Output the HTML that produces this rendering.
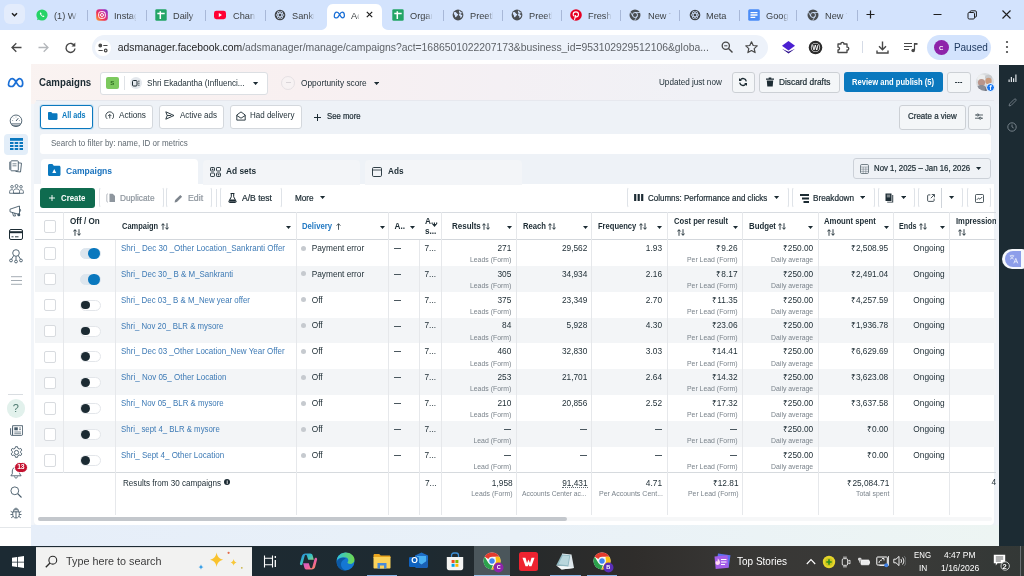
<!DOCTYPE html>
<html lang="en">
<head>
<meta charset="utf-8">
<title>Ads Manager - Campaigns</title>
<style>
*{box-sizing:border-box;margin:0;padding:0}
html,body{width:1024px;height:576px;overflow:hidden;background:#fff}
body{font-family:"Liberation Sans",sans-serif;color:#1c2b33;position:relative;font-size:8px;line-height:1}
.abs{position:absolute}
.t{position:absolute;white-space:nowrap;line-height:1}
/* ---------- browser chrome ---------- */
#tabbar{left:0;top:0;width:1024px;height:30px;background:#d3e3fd}
#toolbar{left:0;top:30px;width:1024px;height:34px;background:#fff;border-radius:5px 5px 0 0}
.tab{position:absolute;top:0;height:30px}
.tabtxt{position:absolute;top:10px;font-size:9.800px;transform-origin:0 0;transform:scaleX(.94);color:#3c4043;white-space:nowrap;overflow:hidden;line-height:12px;-webkit-mask-image:linear-gradient(90deg,#000 72%,transparent 100%);mask-image:linear-gradient(90deg,#000 72%,transparent 100%)}
.tabsep{position:absolute;top:10px;width:1px;height:11px;background:#a8b8d8}
.fav{position:absolute;top:9px;width:12px;height:12px}
#omni{left:92px;top:35px;width:676px;height:25px;border-radius:13px;background:#edf2fa}
/* ---------- page ---------- */
#page{left:0;top:64px;width:999px;height:482px;background:linear-gradient(90deg,#faf3f1 0%,#f8f0f1 30%,#f4f0f4 50%,#f0f1f6 70%,#eff1f6 100%)}
#lnav{left:0;top:64px;width:31px;height:482px;background:#fff}
#rnav{left:998.700px;top:64.500px;width:25.300px;height:481.500px;background:#1c2b33}
#panel{left:33.500px;top:100px;width:962.500px;height:446px;background:#eef2f7;border-radius:6px 6px 0 0}
#white{left:34px;top:184px;width:960px;height:341px;background:#fff;border-radius:0 0 4px 4px}
.btn{position:absolute;background:#f4f6f8;border:1px solid #ccd0d5;border-radius:3px}
.btnw{position:absolute;background:#fff;border:1px solid #d4d8dd;border-radius:3px}
.b{font-weight:bold}
.m{font-weight:normal;-webkit-text-stroke:.22px currentColor}
.brk{position:absolute;top:187px;height:21px;border:1px solid #dfe3e8;border-top-color:transparent;border-bottom-color:transparent;border-radius:3px;background:#fff}
.hd{font-weight:bold;font-size:8.200px;color:#1c2b33}
.nm{font-size:8.600px;color:#3d7ab5}
.v{font-size:8.300px;color:#1c2b33}
.s{font-size:6.900px;color:#7a838b}
.cb{position:absolute;width:12.500px;height:12.500px;border:1px solid #d8dbdf;border-radius:2px;background:#fff}
.tg{position:absolute;left:79.500px;width:21.500px;height:11px;border-radius:6px;background:#fff;border:1px solid #e3e6ea}
.tg i{position:absolute;left:0.700px;top:0.100px;width:8.800px;height:8.800px;border-radius:5px;background:#1c2b33;display:block}
.tg.on{background:#dde6ee;border-color:#dde6ee}
.tg.on i{left:7.900px;top:-1.200px;width:11.500px;height:11.500px;border-radius:6px;background:#0a78be}
.dot{position:absolute;left:300.600px;width:5px;height:5px;border-radius:3px;background:#c6cacf}
.dash{position:absolute;width:7px;height:1px;background:#4a575f}
/* ---------- taskbar ---------- */
#taskbar{left:0;top:546px;width:1024px;height:30px;background:linear-gradient(90deg,#1c2a33 0%,#1e2a31 42%,#272a2b 52%,#2f2d2b 62%,#383735 72%,#3a3a38 88%,#333836 100%)}
</style>
</head>
<body>
<div id="root" style="position:absolute;left:0;top:0;width:1024px;height:576px;overflow:hidden;will-change:transform">
<!-- ================= TAB BAR ================= -->
<div id="tabbar" class="abs"></div>
<div id="toolbar" class="abs"></div>
<!--TABS-START-->
<div class="abs" style="left:4px;top:4px;width:21px;height:20px;border-radius:6px;background:#e3ecfc"></div>
<svg class="abs" style="left:10px;top:10px" width="9" height="9" viewBox="0 0 9 9"><path d="M2 3.200l2.500 2.500L7 3.200" fill="none" stroke="#1f1f1f" stroke-width="1.500"/></svg>
<svg class="abs" style="left:320px;top:4px" width="70" height="26" viewBox="0 0 70 26"><path d="M0 26c4 0 7-2 7-6V7c0-4 2-7 6-7h43c4 0 6 3 6 7v13c0 4 3 6 8 6z" fill="#fff"/></svg>
<svg class="fav" style="left:36px" viewBox="0 0 12 12"><circle cx="6" cy="6" r="5.6" fill="#25d366"/><path d="M1 11.2l1-2.6 1.8 1.4z" fill="#25d366"/><path d="M4.3 3.3c-.5.4-.6 1.1-.3 1.8.5 1.200 1.500 2.200 2.700 2.700.7.300 1.400.200 1.800-.300l-.9-1-.8.400c-.7-.300-1.300-.900-1.600-1.600l.4-.8z" fill="#fff"/></svg>
<div class="tabtxt" style="left:53.7px;width:25px">(1) Wh</div>
<svg class="fav" style="left:96px" viewBox="0 0 12 12"><defs><linearGradient id="igg96" x1="0" y1="1" x2="1" y2="0"><stop offset="0" stop-color="#fdb034"/><stop offset=".35" stop-color="#f4364c"/><stop offset=".7" stop-color="#c32aa3"/><stop offset="1" stop-color="#6a3fd8"/></linearGradient></defs><rect x=".2" y=".2" width="11.600" height="11.600" rx="3" fill="url(#igg96)"/><rect x="2.700" y="2.700" width="6.600" height="6.600" rx="2" fill="none" stroke="#fff" stroke-width="1"/><circle cx="6" cy="6" r="1.500" fill="none" stroke="#fff" stroke-width="1"/><circle cx="8.300" cy="3.700" r=".5" fill="#fff"/></svg>
<div class="tabtxt" style="left:114.3px;width:24px">Instag</div>
<svg class="fav" style="left:155px" viewBox="0 0 12 12"><rect x=".3" y=".2" width="11.400" height="11.600" rx="1.300" fill="#23a566"/><path d="M2.300 4.600h7.400M5.300 2.300v7.600" stroke="#fff" stroke-width="1.500" fill="none"/></svg>
<div class="tabtxt" style="left:173.4px;width:25px">Daily s</div>
<svg class="fav" style="left:214px" viewBox="0 0 12 12"><rect x="0" y="1.800" width="12" height="8.400" rx="2.400" fill="#f03"/><path d="M4.800 4.100l3.200 1.900-3.200 1.900z" fill="#fff"/></svg>
<div class="tabtxt" style="left:232.6px;width:24px">Chann</div>
<svg class="fav" style="left:274px" viewBox="0 0 12 12"><circle cx="6" cy="6" r="5.300" fill="#3f4347"/><g fill="none" stroke="#d3e3fd" stroke-width=".7"><ellipse cx="6" cy="6" rx="4" ry="1.700"/><ellipse cx="6" cy="6" rx="4" ry="1.700" transform="rotate(60 6 6)"/><ellipse cx="6" cy="6" rx="4" ry="1.700" transform="rotate(120 6 6)"/></g></svg>
<div class="tabtxt" style="left:291.8px;width:24px">Sankra</div>
<svg class="fav" style="left:333px;width:13px" viewBox="0 0 13 12"><path d="M1.300 7.600C1.300 5 2.500 3.200 3.900 3.200c1.100 0 1.900.900 2.700 2.400.8 1.500 1.600 3.200 3 3.200 1.100 0 1.800-.900 1.800-2.200 0-2-1-3.400-2.200-3.400-1 0-1.800.900-2.600 2.400-.8 1.500-1.500 3.200-2.900 3.200C2.300 8.800 1.300 8.600 1.300 7.600z" fill="none" stroke="#1a6fd6" stroke-width="1.250" stroke-linejoin="round"/></svg>
<div class="tabtxt" style="left:350.8px;width:8.5px">Ad</div>
<svg class="fav" style="left:391.5px" viewBox="0 0 12 12"><rect x=".3" y=".2" width="11.400" height="11.600" rx="1.300" fill="#23a566"/><path d="M2.300 4.600h7.400M5.300 2.300v7.600" stroke="#fff" stroke-width="1.500" fill="none"/></svg>
<div class="tabtxt" style="left:410.2px;width:24px">Organ</div>
<svg class="fav" style="left:451.5px" viewBox="0 0 12 12"><circle cx="6" cy="6" r="5.400" fill="#4a4e52"/><path d="M2.200 3.200c1.200-.4 2 .2 2.600 1 .5.700 1.600.5 1.400 1.500-.2.900-1.200.7-1.500 1.500-.2.700-.6 1.300-1.200 1-.7-.5-.3-1.400-.9-2.100C2 5.400 1.500 4.300 2.200 3.200zM7.500 1.400c.9.300.6 1.100 1.300 1.500.6.400 1.300.5 1.600 1.300-.6.200-1.200-.1-1.700.3-.5.500.1 1.200.7 1.300.4.100.8.200.9.700-.2 1.200-1 2.100-1.900 2.600-.3-.6.200-1.200-.2-1.800-.4-.6-1.200-.6-1.200-1.400 0-.7.700-.9.700-1.600 0-.6-.7-.7-.8-1.300-.1-.6.200-1.200.6-1.600z" fill="#d3e3fd"/></svg>
<div class="tabtxt" style="left:469.7px;width:25px">Preeth</div>
<svg class="fav" style="left:511px" viewBox="0 0 12 12"><circle cx="6" cy="6" r="5.400" fill="#4a4e52"/><path d="M2.200 3.200c1.200-.4 2 .2 2.600 1 .5.700 1.600.5 1.400 1.500-.2.900-1.200.7-1.500 1.500-.2.700-.6 1.300-1.200 1-.7-.5-.3-1.400-.9-2.100C2 5.400 1.500 4.300 2.200 3.200zM7.500 1.400c.9.300.6 1.100 1.300 1.500.6.400 1.300.5 1.600 1.300-.6.200-1.200-.1-1.700.3-.5.500.1 1.200.7 1.300.4.100.8.200.9.700-.2 1.200-1 2.100-1.900 2.600-.3-.6.200-1.200-.2-1.800-.4-.6-1.200-.6-1.200-1.400 0-.7.700-.9.700-1.600 0-.6-.7-.7-.8-1.300-.1-.6.200-1.200.6-1.600z" fill="#d3e3fd"/></svg>
<div class="tabtxt" style="left:528.5px;width:25px">Preeth</div>
<svg class="fav" style="left:569.5px" viewBox="0 0 12 12"><circle cx="6" cy="6" r="5.800" fill="#e60023"/><path d="M4.600 10.400c.3-1.200.7-2.600 1-3.900M5.200 7.300c1 1 3.300.5 3.300-1.900 0-1.500-1.100-2.500-2.600-2.500-1.700 0-2.700 1.200-2.700 2.500 0 .7.300 1.300.8 1.500" fill="none" stroke="#fff" stroke-width="1.150" stroke-linecap="round"/></svg>
<div class="tabtxt" style="left:587.5px;width:25px">Fresh</div>
<svg class="fav" style="left:629px" viewBox="0 0 12 12"><circle cx="6" cy="6" r="5.500" fill="#4a4e52"/><circle cx="6" cy="6" r="2.500" fill="#4a4e52" stroke="#d3e3fd" stroke-width=".9"/><path d="M6 3.500h5M3.800 7.200L1.400 3M8.200 7.200L5.700 11.400" stroke="#d3e3fd" stroke-width=".8" fill="none"/></svg>
<div class="tabtxt" style="left:647.5px;width:25px">New Ta</div>
<svg class="fav" style="left:688.5px" viewBox="0 0 12 12"><circle cx="6" cy="6" r="5.300" fill="#3f4347"/><g fill="none" stroke="#d3e3fd" stroke-width=".7"><ellipse cx="6" cy="6" rx="4" ry="1.700"/><ellipse cx="6" cy="6" rx="4" ry="1.700" transform="rotate(60 6 6)"/><ellipse cx="6" cy="6" rx="4" ry="1.700" transform="rotate(120 6 6)"/></g></svg>
<div class="tabtxt" style="left:706.4px;width:30px;-webkit-mask-image:none;mask-image:none">Meta</div>
<svg class="fav" style="left:747.5px" viewBox="0 0 12 12"><rect x=".2" y=".2" width="11.600" height="11.600" rx="1.500" fill="#4c8df6"/><path d="M2.500 3.600h7M2.500 6h7M2.500 8.400h4.800" stroke="#fff" stroke-width="1.300" fill="none"/></svg>
<div class="tabtxt" style="left:765.6px;width:24px">Googl</div>
<svg class="fav" style="left:806.5px" viewBox="0 0 12 12"><circle cx="6" cy="6" r="5.500" fill="#4a4e52"/><circle cx="6" cy="6" r="2.500" fill="#4a4e52" stroke="#d3e3fd" stroke-width=".9"/><path d="M6 3.500h5M3.800 7.200L1.400 3M8.200 7.200L5.700 11.400" stroke="#d3e3fd" stroke-width=".8" fill="none"/></svg>
<div class="tabtxt" style="left:825px;width:24px">New Ta</div>
<div class="tabsep" style="left:86.8px"></div>
<div class="tabsep" style="left:146.0px"></div>
<div class="tabsep" style="left:205.4px"></div>
<div class="tabsep" style="left:264.5px"></div>
<div class="tabsep" style="left:442.5px"></div>
<div class="tabsep" style="left:501.5px"></div>
<div class="tabsep" style="left:560.8px"></div>
<div class="tabsep" style="left:620.0px"></div>
<div class="tabsep" style="left:679.2px"></div>
<div class="tabsep" style="left:738.5px"></div>
<div class="tabsep" style="left:795.8px"></div>
<div class="tabsep" style="left:856.7px"></div>
<svg class="abs" style="left:365px;top:10px" width="9" height="9" viewBox="0 0 9 9"><path d="M1.800 1.800l5.400 5.400M7.200 1.800L1.800 7.200" stroke="#1f1f1f" stroke-width="1.200"/></svg>
<svg class="abs" style="left:865px;top:9px" width="11" height="11" viewBox="0 0 11 11"><path d="M5.500 1.500v8M1.500 5.500h8" stroke="#1f1f1f" stroke-width="1.200"/></svg>
<svg class="abs" style="left:932px;top:9px" width="11" height="11" viewBox="0 0 11 11"><path d="M1.500 5.500h8" stroke="#1f1f1f" stroke-width="1"/></svg>
<svg class="abs" style="left:966px;top:9px" width="12" height="12" viewBox="0 0 12 12"><rect x="2" y="3.500" width="6.500" height="6.500" rx="1.200" fill="none" stroke="#1f1f1f" stroke-width="1"/><path d="M4 3.500V3c0-.8.500-1.200 1.200-1.200h4c.8 0 1.200.5 1.200 1.200v4c0 .8-.4 1.200-1.200 1.200h-.6" fill="none" stroke="#1f1f1f" stroke-width="1"/></svg>
<svg class="abs" style="left:1001px;top:9px" width="11" height="11" viewBox="0 0 11 11"><path d="M1.500 1.500l8 8M9.500 1.500l-8 8" stroke="#1f1f1f" stroke-width="1.100"/></svg>
<!--TABS-END-->
<div id="omni" class="abs"></div>
<!--TB-START-->
<svg class="abs" style="left:10px;top:41px" width="13" height="13" viewBox="0 0 13 13"><path d="M11.500 6.500h-9.500M6.300 2.200L2 6.500l4.300 4.300" fill="none" stroke="#474747" stroke-width="1.300"/></svg>
<svg class="abs" style="left:37px;top:41px" width="13" height="13" viewBox="0 0 13 13"><path d="M1.500 6.500h9.500M6.700 2.200L11 6.500l-4.300 4.300" fill="none" stroke="#b4b7bb" stroke-width="1.300"/></svg>
<svg class="abs" style="left:64px;top:41px" width="13" height="13" viewBox="0 0 13 13"><path d="M10.600 5A4.500 4.500 0 1 0 11 7.500" fill="none" stroke="#474747" stroke-width="1.400"/><path d="M11.300 1.600v3.800H7.500z" fill="#474747"/></svg>
<div class="abs" style="left:95px;top:40px;width:15.5px;height:15.5px;border-radius:8px;background:#fff"></div>
<svg class="abs" style="left:97px;top:42px" width="12" height="12" viewBox="0 0 12 12"><g fill="none" stroke="#474747" stroke-width="1.200"><circle cx="3.300" cy="3.500" r="1.300" fill="#474747"/><path d="M6.300 3.500h4.200M1.500 8.500h4.200"/><circle cx="8.700" cy="8.500" r="1.300"/></g></svg>
<div class="t" id="url" style="left:117.8px;top:41.5px;font-size:10.4px;color:#5f6368;line-height:12px;letter-spacing:-0.016px"><span style="color:#1f1f1f">adsmanager.facebook.com</span>/adsmanager/manage/campaigns?act=1686501022207173&amp;business_id=953102929512106&amp;globa...</div>
<svg class="abs" style="left:720px;top:40px" width="14" height="14" viewBox="0 0 14 14"><circle cx="5.800" cy="5.800" r="3.600" fill="none" stroke="#474747" stroke-width="1.300"/><path d="M8.500 8.500l4 4" stroke="#474747" stroke-width="1.500"/><path d="M4.200 5.800h3.200" stroke="#474747" stroke-width="1"/></svg>
<svg class="abs" style="left:744px;top:40px" width="15" height="15" viewBox="0 0 15 15"><path d="M7.500 1.800l1.700 3.700 4 .4-3 2.700.9 4-3.600-2.100-3.600 2.100.9-4-3-2.700 4-.4z" fill="none" stroke="#474747" stroke-width="1.200" stroke-linejoin="round"/></svg>
<svg class="abs" style="left:781px;top:40px" width="15" height="15" viewBox="0 0 15 15"><path d="M7.500 1L14 5.800 7.500 10.600 1 5.800z" fill="#4a1fd1"/><path d="M1 8.800l6.500 4.800L14 8.800 7.500 11.800z" fill="#2a0c8c"/></svg>
<svg class="abs" style="left:808px;top:40px" width="15" height="15" viewBox="0 0 15 15"><circle cx="7.500" cy="7.500" r="6.800" fill="#2b2b2b"/><circle cx="7.500" cy="7.500" r="4.600" fill="#fff"/><circle cx="7.500" cy="7.500" r="3.900" fill="#2b2b2b"/></svg>
<div class="t" style="left:812.3px;top:44.5px;font-size:6.5px;font-weight:bold;color:#fff">W</div>
<svg class="abs" style="left:835px;top:39px" width="16" height="16" viewBox="0 0 16 16"><path d="M3 5h3c-.6-2.300 3.400-2.300 2.800 0H12v3.200c2.300-.6 2.300 3.400 0 2.800V13.500H3V10.800c2 .3 2-2.900 0-2.600z" fill="none" stroke="#474747" stroke-width="1.300" stroke-linejoin="round"/></svg>
<div class="abs" style="left:862px;top:41px;width:1px;height:12px;background:#d5dbe6"></div>
<svg class="abs" style="left:875px;top:40px" width="15" height="15" viewBox="0 0 15 15"><path d="M7.500 1.500v8M4 6.300l3.500 3.500L11 6.300M2 10.500v2.500h11v-2.500" fill="none" stroke="#474747" stroke-width="1.400"/></svg>
<svg class="abs" style="left:903px;top:41px" width="15" height="13" viewBox="0 0 15 13"><path d="M1 2.500h8M1 5.500h8M1 8.500h5" stroke="#474747" stroke-width="1.200"/><path d="M11.500 2v7" stroke="#474747" stroke-width="1.200"/><path d="M11 2h3.500v1.800H11z" fill="#474747"/><circle cx="10.200" cy="9.500" r="1.800" fill="#474747"/></svg>
<div class="abs" style="left:927px;top:35px;width:64px;height:24.5px;border-radius:12.5px;background:#d3e3fd"></div>
<div class="abs" style="left:933.5px;top:39.5px;width:15.5px;height:15.5px;border-radius:8px;background:#8e24aa"></div>
<div class="t" style="left:939px;top:44.5px;font-size:6px;color:#fff;font-weight:bold">C</div>
<div class="t" style="left:953.9px;top:41.5px;font-size:10px;color:#1f3a60;line-height:12px">Paused</div>
<svg class="abs" style="left:1004px;top:39px" width="6" height="16" viewBox="0 0 6 16"><circle cx="3" cy="3" r="1.100" fill="#474747"/><circle cx="3" cy="8" r="1.100" fill="#474747"/><circle cx="3" cy="13" r="1.100" fill="#474747"/></svg>
<!--TB-END-->

<!-- ================= PAGE ================= -->
<div id="page" class="abs"></div>
<div id="lnav" class="abs"></div>
<div id="rnav" class="abs"></div>
<div class="abs" style="left:31px;top:104px;width:4px;height:442px;background:#f2f5f9"></div>
<div class="abs" style="left:994px;top:104px;width:5px;height:442px;background:#f0f3f8"></div>
<div id="panel" class="abs"></div>
<div class="abs" id="hdrline" style="left:36px;top:100px;width:958px;height:1px;background:#e6e8ee"></div>
<div id="white" class="abs"></div>
<div class="abs" style="left:31px;top:525px;width:968px;height:21px;background:linear-gradient(90deg,#e6eef9 0%,#e9f1f8 50%,#edf5f3 100%)"></div>

<!-- ================= FB HEADER ================= -->
<svg class="abs" style="left:7px;top:76.500px" width="18" height="12" viewBox="0 0 18 12"><path d="M1.500 7.800C1.500 4.200 3.200 1.600 5.200 1.600c1.500 0 2.600 1.200 3.800 3.300 1.200 2.100 2.300 4.600 4.300 4.600 1.500 0 2.400-1.300 2.400-3.100 0-2.800-1.400-4.800-3.100-4.800-1.400 0-2.500 1.300-3.600 3.300-1.200 2.100-2.100 4.600-4.100 4.600-1.500 0-3.400-.300-3.400-1.700z" fill="none" stroke="#1a6fd6" stroke-width="1.700" stroke-linejoin="round"/></svg>
<div class="t b" id="h-camp" style="left:39px;top:78.100px;font-size:10px;color:#1c2b33;transform-origin:0 0;transform:scaleX(0.968)">Campaigns</div>
<div class="btnw" style="left:99.500px;top:72px;width:168px;height:22.500px;border-color:#dcdfe3"></div>
<div class="abs" style="left:106px;top:76.500px;width:12.500px;height:12.500px;border-radius:2px;background:#7cc95e"></div>
<div class="t b" style="left:110.200px;top:80px;font-size:6px;color:#2d6a1f">S</div>
<div class="abs" style="left:124px;top:76px;width:1px;height:14px;background:#dfe2e6"></div>
<div class="abs" style="left:129.500px;top:76.500px;width:12.500px;height:12.500px;border-radius:7px;background:#e4e8ed"></div>
<svg class="abs" style="left:132px;top:79.500px" width="8" height="7" viewBox="0 0 8 7"><rect x=".5" y=".5" width="4.500" height="5.500" rx="1" fill="none" stroke="#1c2b33" stroke-width="1"/><path d="M6.200 1.200h1.300M6.200 3.200h1.300M6.200 5.200h1.300" stroke="#1c2b33" stroke-width=".9"/></svg>
<div class="t" id="h-acct" style="left:146.900px;top:78.9px;font-size:8.700px;color:#1c2b33;transform-origin:0 0;transform:scaleX(0.936)">Shri Ekadantha (Influenci...</div>
<svg class="abs caret" style="left:253.4px;top:82.2px" width="5.200" height="3.200" viewBox="0 0 7 4"><path d="M0 0h7L3.500 4z" fill="#1c2b33"/></svg>
<div class="abs" style="left:281px;top:75.500px;width:14px;height:14px;border-radius:7px;border:1px solid #e4dfe2;background:#f7f2f3"></div>
<div class="abs" style="left:285.500px;top:82px;width:5px;height:1px;background:#d9d4d8"></div>
<div class="t" id="h-opp" style="left:301.200px;top:78.9px;font-size:8.700px;color:#1c2b33;transform-origin:0 0;transform:scaleX(0.959)">Opportunity score</div>
<svg class="abs caret" style="left:373.9px;top:82.2px" width="5.200" height="3.200" viewBox="0 0 7 4"><path d="M0 0h7L3.500 4z" fill="#1c2b33"/></svg>

<div class="t" id="h-upd" style="left:659.200px;top:78.2px;font-size:8.700px;color:#1c2b33;transform-origin:0 0;transform:scaleX(0.935)">Updated just now</div>
<div class="btn" style="left:731.500px;top:71.500px;width:23px;height:21.500px"></div>
<svg class="abs" style="left:738px;top:77px" width="10" height="10" viewBox="0 0 10 10"><path d="M8.300 4.300A3.400 3.400 0 0 0 2.300 2.800M1.700 5.700a3.400 3.400 0 0 0 6 1.500" fill="none" stroke="#1c2b33" stroke-width="1.300"/><path d="M1 1v2.900h2.900zM9 9V6.100H6.100z" fill="#1c2b33"/></svg>
<div class="btn" style="left:758.500px;top:71.500px;width:81px;height:21.500px"></div>
<svg class="abs" style="left:765.500px;top:77px" width="8" height="10" viewBox="0 0 8 10"><path d="M0 1.600h8v1.200H0zM2.700.4h2.600v1.200H2.700zM.8 3.500h6.400l-.5 6.100H1.300z" fill="#1c2b33"/></svg>
<div class="t m" id="h-disc" style="left:778.900px;top:78.2px;font-size:8.700px;color:#1c2b33;transform-origin:0 0;transform:scaleX(0.959)">Discard drafts</div>
<div class="abs" style="left:843.500px;top:72px;width:99.500px;height:20px;border-radius:3px;background:#0a78be"></div>
<div class="t b" id="h-rev" style="left:852.300px;top:78.0px;font-size:8.500px;color:#fff;transform-origin:0 0;transform:scaleX(0.891)">Review and publish (5)</div>
<div class="btn" style="left:947px;top:71.500px;width:23.500px;height:21.500px"></div>
<div class="abs" style="left:955.300px;top:81.700px;width:1.600px;height:1.600px;border-radius:1px;background:#1c2b33;box-shadow:2.600px 0 0 #1c2b33,5.200px 0 0 #1c2b33"></div>
<!-- avatar -->
<svg class="abs" style="left:976px;top:73px" width="18" height="18" viewBox="0 0 18 18"><defs><clipPath id="avc"><circle cx="9" cy="9" r="9"/></clipPath></defs><g clip-path="url(#avc)"><rect width="18" height="18" fill="#d9dcdf"/><ellipse cx="5.500" cy="5" rx="4.500" ry="3.500" fill="#eceeef"/><ellipse cx="12.500" cy="4.500" rx="3.500" ry="2.800" fill="#c7c9cc"/><circle cx="5.500" cy="9.500" r="3.600" fill="#b9958b"/><circle cx="12.500" cy="8" r="3.200" fill="#c89a7e"/><path d="M0 18c0-4 2-6 5.500-6s5 2 5.500 6z" fill="#8a8d96"/><path d="M9 18c.3-4 1.500-6.500 4.500-6.500s4.500 2.500 4.500 6.500z" fill="#6f7480"/></g></svg>
<div class="abs" style="left:985.800px;top:82.800px;width:9.400px;height:9.400px;border-radius:5px;background:#1877f2;border:1px solid #fff"></div>
<div class="t b" style="left:989.600px;top:85px;font-size:6.500px;color:#fff">f</div>

<!-- ================= FILTER ROW ================= -->
<div class="abs" style="left:40px;top:105px;width:53px;height:23.500px;border-radius:3px;border:1px solid #0a78be;background:#fff;box-shadow:0 0 0 1px #cfe4f3"></div>
<svg class="abs" style="left:48px;top:111.600px" width="9.500" height="8" viewBox="0 0 11 9"><path d="M0 1.200C0 .5.500 0 1.200 0h2.600l1.200 1.400h4.800c.700 0 1.200.5 1.200 1.200v5.200c0 .7-.5 1.200-1.200 1.200H1.200C.5 9 0 8.500 0 7.800z" fill="#0a78be"/></svg>
<div class="t b" id="f-all" style="left:61.500px;top:111.4px;font-size:8.500px;color:#0a78be;transform-origin:0 0;transform:scaleX(0.843)">All ads</div>
<div class="btnw" style="left:98px;top:105px;width:55px;height:23.500px"></div>
<svg class="abs" style="left:104.500px;top:111px" width="9.500" height="9.500" viewBox="0 0 10 10"><path d="M2.300 8.300A4.200 4.200 0 1 1 7.700 8.300" fill="none" stroke="#1c2b33" stroke-width=".9"/><path d="M5 7.800V3.800M3.300 5.300L5 3.600l1.700 1.700" fill="none" stroke="#1c2b33" stroke-width=".9"/></svg>
<div class="t" id="f-act" style="left:118.500px;top:110.7px;font-size:8.700px;color:#1c2b33;transform-origin:0 0;transform:scaleX(0.947)">Actions</div>
<div class="btnw" style="left:158.500px;top:105px;width:65px;height:23.500px"></div>
<svg class="abs" style="left:165px;top:111.200px" width="10" height="9" viewBox="0 0 10 9"><path d="M.8.800l8.200 3.700L.8 8.200l1.400-3.700zM2.200 4.500h4" fill="none" stroke="#1c2b33" stroke-width=".9" stroke-linejoin="round"/></svg>
<div class="t" id="f-aa" style="left:179.500px;top:111.2px;font-size:8.700px;color:#1c2b33;transform-origin:0 0;transform:scaleX(0.923)">Active ads</div>
<div class="btnw" style="left:229.500px;top:105px;width:72px;height:23.500px"></div>
<svg class="abs" style="left:235.500px;top:110.700px" width="10" height="10" viewBox="0 0 10 10"><path d="M.8 4L5 .9 9.200 4v5.100H.8zM.8 4.500l4.200 2.700 4.200-2.700" fill="none" stroke="#1c2b33" stroke-width=".9" stroke-linejoin="round"/></svg>
<div class="t" id="f-hd" style="left:249.500px;top:111.2px;font-size:8.700px;color:#1c2b33;transform-origin:0 0;transform:scaleX(0.921)">Had delivery</div>
<svg class="abs" style="left:314px;top:113.500px" width="7" height="7" viewBox="0 0 7 7"><path d="M3.500 0v7M0 3.500h7" stroke="#1c2b33" stroke-width="1"/></svg>
<div class="t m" id="f-sm" style="left:326.700px;top:112.0px;font-size:8.500px;color:#1c2b33;transform-origin:0 0;transform:scaleX(0.909)">See more</div>

<div class="btn" style="left:898.500px;top:104.500px;width:67px;height:25px"></div>
<div class="t m" id="f-cv" style="left:907.500px;top:111.7px;font-size:8.700px;color:#1c2b33;transform-origin:0 0;transform:scaleX(0.919)">Create a view</div>
<div class="btn" style="left:967.500px;top:104.500px;width:23px;height:25px"></div>
<svg class="abs" style="left:975px;top:113.300px" width="8" height="7.200" viewBox="0 0 10 9"><path d="M0 2.500h10M0 6.500h10" stroke="#1c2b33" stroke-width=".9"/><circle cx="3.500" cy="2.500" r="1.300" fill="#f4f6f8" stroke="#1c2b33" stroke-width=".9"/><circle cx="6.500" cy="6.500" r="1.300" fill="#f4f6f8" stroke="#1c2b33" stroke-width=".9"/></svg>

<!-- ================= SEARCH ================= -->
<div class="abs" style="left:40px;top:133.500px;width:950.500px;height:20px;border-radius:3px;background:#fff"></div>
<div class="t" id="s-ph" style="left:50.500px;top:140px;font-size:8.200px;color:#606a72;transform-origin:0 0;transform:scaleX(0.979)">Search to filter by: name, ID or metrics</div>

<!-- ================= TABS ================= -->
<div class="abs" style="left:40.500px;top:158.500px;width:157.500px;height:26px;border-radius:4px 4px 0 0;background:#fff"></div>
<svg class="abs" style="left:48px;top:164px" width="12.500" height="12" viewBox="0 0 12.500 12"><path d="M0 1.500C0 .7.600 0 1.400 0h3l1.400 1.700h5.300c.8 0 1.400.7 1.400 1.500v7.300c0 .8-.6 1.500-1.400 1.500H1.400C.6 12 0 11.300 0 10.500z" fill="#0a78be"/><path d="M6.250 5l2 4h-4z" fill="#fff"/></svg>
<div class="t b" id="t-camp" style="left:65.500px;top:166.500px;font-size:8.600px;color:#1771bd;transform-origin:0 0;transform:scaleX(0.995)">Campaigns</div>
<div class="abs" style="left:203px;top:159.500px;width:157px;height:25px;border-radius:4px 4px 0 0;background:#f3f5f8"></div>
<svg class="abs" style="left:209.500px;top:166.500px" width="11" height="10" viewBox="0 0 11 10"><g fill="none" stroke="#1c2b33" stroke-width=".9"><rect x=".5" y=".5" width="4" height="3.500" rx=".7"/><rect x="6.500" y=".5" width="4" height="3.500" rx=".7"/><rect x=".5" y="6" width="4" height="3.500" rx=".7"/><rect x="6.500" y="6" width="4" height="3.500" rx=".7"/></g><rect x="1.800" y="1.700" width="1.500" height="1.200" fill="#1c2b33"/><rect x="7.800" y="7.200" width="1.500" height="1.200" fill="#1c2b33"/></svg>
<div class="t b" id="t-as" style="left:225.800px;top:167px;font-size:8.300px;color:#1c2b33;transform-origin:0 0;transform:scaleX(1.007)">Ad sets</div>
<div class="abs" style="left:365px;top:159.500px;width:157px;height:25px;border-radius:4px 4px 0 0;background:#f3f5f8"></div>
<svg class="abs" style="left:372px;top:166.500px" width="10" height="10" viewBox="0 0 10 10"><rect x=".5" y=".5" width="9" height="9" rx="1.200" fill="none" stroke="#1c2b33" stroke-width=".9"/><path d="M.5 3h9" stroke="#1c2b33" stroke-width=".8"/></svg>
<div class="t b" id="t-ads" style="left:387.500px;top:167px;font-size:8.300px;color:#1c2b33;transform-origin:0 0;transform:scaleX(0.988)">Ads</div>

<div class="abs" style="left:852.500px;top:158px;width:138px;height:21px;border-radius:3px;background:#eff2f6;border:1px solid #ccd1d8"></div>
<svg class="abs" style="left:859.500px;top:163.500px" width="9" height="10" viewBox="0 0 9 10"><rect x=".5" y=".5" width="8" height="9" rx="1.200" fill="none" stroke="#44535c" stroke-width=".7"/><path d="M.5 3h8M3.200 3v6.500M5.800 3v6.500M.5 5.200h8M.5 7.400h8" stroke="#5a6870" stroke-width=".45"/></svg>
<div class="t m" id="t-date" style="left:873.800px;top:164.500px;font-size:8.200px;color:#1c2b33;transform-origin:0 0;transform:scaleX(0.956)">Nov 1, 2025 – Jan 16, 2026</div>
<svg class="abs caret" style="left:976.4px;top:167.4px" width="5.200" height="3.200" viewBox="0 0 7 4"><path d="M0 0h7L3.500 4z" fill="#1c2b33"/></svg>

<!-- ================= ACTION TOOLBAR ================= -->
<div class="abs" style="left:40px;top:187.500px;width:54.500px;height:20.500px;border-radius:3px;background:#0f6b4f"></div>
<svg class="abs" style="left:49px;top:194.800px" width="6" height="6" viewBox="0 0 7 7"><path d="M3.500 0v7M0 3.500h7" stroke="#fff" stroke-width="1.100"/></svg>
<div class="t b" id="a-create" style="left:60.900px;top:193.5px;font-size:8.500px;color:#fff;transform-origin:0 0;transform:scaleX(0.922)">Create</div>

<div class="brk" style="left:98.500px;width:65.500px"></div>
<svg class="abs" style="left:105.500px;top:193px" width="10" height="10" viewBox="0 0 10 10"><path d="M1.800.8C1 .8.800 1.300.800 2v6c0 .7.200 1.200 1 1.200" fill="none" stroke="#a4abb3" stroke-width=".8"/><path d="M3.500.8h3.200L9 3v6H3.500z" fill="#8e969e"/></svg>
<div class="t m" id="a-dup" style="left:119.500px;top:193.5px;font-size:8.700px;color:#8e969e;transform-origin:0 0;transform:scaleX(0.953)">Duplicate</div>
<div class="brk" style="left:166px;width:46px"></div>
<svg class="abs" style="left:174px;top:193.500px" width="9" height="9" viewBox="0 0 9 9"><path d="M.6 8.400l.5-2.300L6.300.9l1.800 1.800-5.200 5.200z" fill="#7d858d"/></svg>
<div class="t m" id="a-edit" style="left:187.800px;top:193.5px;font-size:8.700px;color:#8e969e;transform-origin:0 0;transform:scaleX(1.008)">Edit</div>
<div class="abs" style="left:216px;top:189px;width:1px;height:18px;background:#dfe3e8"></div>
<div class="brk" style="left:220px;width:61.500px"></div>
<svg class="abs" style="left:228px;top:193px" width="9" height="10" viewBox="0 0 9 10"><path d="M2.600.5h3.800M3.300.5v3.300L.9 8.300c-.3.600 0 1.200.7 1.200h5.800c.7 0 1-.6.700-1.200L5.700 3.800V.5" fill="none" stroke="#1c2b33" stroke-width="1"/><path d="M2 6.500h5l1 2.200H1z" fill="#1c2b33"/></svg>
<div class="t m" id="a-ab" style="left:242px;top:193.5px;font-size:8.700px;color:#1c2b33;transform-origin:0 0;transform:scaleX(0.983)">A/B test</div>
<div class="t m" id="a-more" style="left:295px;top:193.5px;font-size:8.700px;color:#1c2b33;transform-origin:0 0;transform:scaleX(0.940)">More</div>
<svg class="abs caret" style="left:320.4px;top:196.4px" width="5.200" height="3.200" viewBox="0 0 7 4"><path d="M0 0h7L3.500 4z" fill="#1c2b33"/></svg>

<div class="brk" style="left:627px;width:161.500px"></div>
<svg class="abs" style="left:634px;top:194px" width="10" height="7" viewBox="0 0 10 7"><path d="M1.200 0v7M4.700 0v7M8.200 0v7" stroke="#1c2b33" stroke-width="2.200"/></svg>
<div class="t m" id="a-col" style="left:647.700px;top:193.5px;font-size:8.700px;color:#1c2b33;transform-origin:0 0;transform:scaleX(0.921)">Columns: Performance and clicks</div>
<svg class="abs caret" style="left:774.4px;top:196.4px" width="5.200" height="3.200" viewBox="0 0 7 4"><path d="M0 0h7L3.500 4z" fill="#1c2b33"/></svg>
<div class="brk" style="left:792px;width:83px"></div>
<svg class="abs" style="left:799.500px;top:193.500px" width="9" height="9" viewBox="0 0 9 9"><path d="M0 1h9M2 4.500h7M3.500 8h5.500" stroke="#1c2b33" stroke-width="2"/></svg>
<div class="t m" id="a-brk" style="left:812.700px;top:193.5px;font-size:8.700px;color:#1c2b33;transform-origin:0 0;transform:scaleX(0.943)">Breakdown</div>
<svg class="abs caret" style="left:859.9px;top:196.4px" width="5.200" height="3.200" viewBox="0 0 7 4"><path d="M0 0h7L3.500 4z" fill="#1c2b33"/></svg>
<div class="brk" style="left:878px;width:37px"></div>
<svg class="abs" style="left:885px;top:193px" width="10" height="10" viewBox="0 0 10 10"><path d="M.5.500h6v7.500h-6z" fill="#1c2b33"/><path d="M7.300 2v6.800H2.200v.7h6V2z" fill="#1c2b33"/><path d="M1.800 2.200h3.400M1.800 3.800h3.400" stroke="#fff" stroke-width=".6"/></svg>
<svg class="abs caret" style="left:900.9px;top:196.4px" width="5.200" height="3.200" viewBox="0 0 7 4"><path d="M0 0h7L3.500 4z" fill="#1c2b33"/></svg>
<div class="brk" style="left:918px;width:45px"></div>
<div class="abs" style="left:940.500px;top:188px;width:1px;height:20px;background:#cfd4da"></div>
<svg class="abs" style="left:926.500px;top:194px" width="8" height="8" viewBox="0 0 9 9"><path d="M3.800 1H1.700C1.100 1 .700 1.400.700 2v5.300c0 .6.400 1 1 1H7c.6 0 1-.4 1-1V5.200M5.300.6h3.100v3.100M8.200.8L4.300 4.700" fill="none" stroke="#1c2b33" stroke-width=".9"/></svg>
<svg class="abs caret" style="left:949.4px;top:196.4px" width="5.200" height="3.200" viewBox="0 0 7 4"><path d="M0 0h7L3.500 4z" fill="#1c2b33"/></svg>
<div class="brk" style="left:967px;width:23.500px"></div>
<svg class="abs" style="left:974.500px;top:193.500px" width="9" height="9" viewBox="0 0 10 10"><rect x=".5" y=".5" width="9" height="9" rx="1.300" fill="none" stroke="#1c2b33" stroke-width=".9"/><path d="M2 6.500l2-2 1.500 1.300L8 3.300" fill="none" stroke="#1c2b33" stroke-width=".9"/></svg>
<!-- ================= TABLE ================= -->
<div class="abs" style="left:35px;top:211.9px;width:961px;height:1px;background:#d8dce1"></div>
<div class="abs" style="left:35px;top:239.3px;width:961px;height:1px;background:#d3d7dc"></div>
<div class="abs" style="left:35px;top:265.70px;width:961px;height:25.90px;background:#f3f5f7"></div>
<div class="abs" style="left:35px;top:317.50px;width:961px;height:25.90px;background:#f3f5f7"></div>
<div class="abs" style="left:35px;top:369.30px;width:961px;height:25.90px;background:#f3f5f7"></div>
<div class="abs" style="left:35px;top:421.10px;width:961px;height:25.90px;background:#f3f5f7"></div>
<div class="abs" style="left:35px;top:472.4px;width:961px;height:1px;background:#d6dade"></div>
<div class="abs" style="left:63.1px;top:212.4px;width:1px;height:260.5px;background:#e6e8eb"></div>
<div class="abs" style="left:115.1px;top:239.8px;width:1px;height:274.9px;background:#e6e8eb"></div>
<div class="abs" style="left:295.5px;top:212.4px;width:1px;height:302.3px;background:#e6e8eb"></div>
<div class="abs" style="left:387.5px;top:212.4px;width:1px;height:302.3px;background:#e6e8eb"></div>
<div class="abs" style="left:418.5px;top:239.8px;width:1px;height:274.9px;background:#e6e8eb"></div>
<div class="abs" style="left:440.5px;top:212.4px;width:1px;height:302.3px;background:#e6e8eb"></div>
<div class="abs" style="left:516.0px;top:212.4px;width:1px;height:302.3px;background:#e6e8eb"></div>
<div class="abs" style="left:590.5px;top:212.4px;width:1px;height:302.3px;background:#e6e8eb"></div>
<div class="abs" style="left:667.0px;top:212.4px;width:1px;height:302.3px;background:#e6e8eb"></div>
<div class="abs" style="left:742.0px;top:212.4px;width:1px;height:302.3px;background:#e6e8eb"></div>
<div class="abs" style="left:817.5px;top:212.4px;width:1px;height:302.3px;background:#e6e8eb"></div>
<div class="abs" style="left:892.5px;top:212.4px;width:1px;height:302.3px;background:#e6e8eb"></div>
<div class="abs" style="left:948.5px;top:212.4px;width:1px;height:302.3px;background:#e6e8eb"></div>
<div class="cb" style="left:43.500px;top:220px"></div>
<div class="t hd" id="th-oo" style="left:69.600px;top:218px;transform-origin:0 0;transform:scaleX(0.989)">Off / On</div>
<svg class="abs" style="left:73px;top:229px" width="8" height="7" viewBox="0 0 8 7"><path d="M2 6.800V.800M.3 2.500L2 .700l1.700 1.800M6 .200v6M4.300 4.500L6 6.300l1.700-1.800" fill="none" stroke="#1c2b33" stroke-width=".9"/></svg>
<div class="t hd" id="th-camp" style="left:121.800px;top:222.500px;transform-origin:0 0;transform:scaleX(0.914)">Campaign</div>
<svg class="abs" style="left:161px;top:223px" width="8" height="7" viewBox="0 0 8 7"><path d="M2 6.800V.800M.3 2.500L2 .700l1.700 1.800M6 .200v6M4.300 4.500L6 6.300l1.700-1.800" fill="none" stroke="#1c2b33" stroke-width=".9"/></svg>
<svg class="abs" style="left:285.5px;top:226px" width="5" height="3" viewBox="0 0 5 3"><path d="M0 0h5L2.500 3z" fill="#1c2b33"/></svg>
<div class="t hd" id="th-del" style="left:302px;top:222.500px;color:#2279c3;transform-origin:0 0;transform:scaleX(0.941)">Delivery</div>
<svg class="abs" style="left:336px;top:223px" width="5" height="7" viewBox="0 0 5 7"><path d="M2.500 6.800V.800M.6 2.700L2.500.700l1.900 2" fill="none" stroke="#33434d" stroke-width=".9"/></svg>
<svg class="abs" style="left:379.5px;top:226px" width="5" height="3" viewBox="0 0 5 3"><path d="M0 0h5L2.500 3z" fill="#1c2b33"/></svg>
<div class="t hd" style="left:394.600px;top:222.500px">A..</div>
<svg class="abs" style="left:409.5px;top:226px" width="5" height="3" viewBox="0 0 5 3"><path d="M0 0h5L2.500 3z" fill="#1c2b33"/></svg>
<div class="t hd" style="left:425px;top:218px">A...</div><div class="t hd" style="left:425px;top:227.500px">s...</div>
<svg class="abs" style="left:431.5px;top:224px" width="5" height="3" viewBox="0 0 5 3"><path d="M0 0h5L2.500 3z" fill="#1c2b33"/></svg>
<div class="t hd" id="th-res" style="left:451.900px;top:222.500px;transform-origin:0 0;transform:scaleX(0.974)">Results</div>
<svg class="abs" style="left:481.5px;top:223px" width="8" height="7" viewBox="0 0 8 7"><path d="M2 6.800V.800M.3 2.500L2 .700l1.700 1.800M6 .200v6M4.300 4.500L6 6.300l1.700-1.800" fill="none" stroke="#1c2b33" stroke-width=".9"/></svg>
<svg class="abs" style="left:506.5px;top:226px" width="5" height="3" viewBox="0 0 5 3"><path d="M0 0h5L2.500 3z" fill="#1c2b33"/></svg>
<div class="t hd" id="th-reach" style="left:523px;top:222.500px;transform-origin:0 0;transform:scaleX(0.936)">Reach</div>
<svg class="abs" style="left:547.5px;top:223px" width="8" height="7" viewBox="0 0 8 7"><path d="M2 6.800V.800M.3 2.500L2 .700l1.700 1.800M6 .200v6M4.300 4.500L6 6.300l1.700-1.800" fill="none" stroke="#1c2b33" stroke-width=".9"/></svg>
<svg class="abs" style="left:582.5px;top:226px" width="5" height="3" viewBox="0 0 5 3"><path d="M0 0h5L2.500 3z" fill="#1c2b33"/></svg>
<div class="t hd" id="th-freq" style="left:598px;top:222.500px;transform-origin:0 0;transform:scaleX(0.924)">Frequency</div>
<svg class="abs" style="left:638.5px;top:223px" width="8" height="7" viewBox="0 0 8 7"><path d="M2 6.800V.800M.3 2.500L2 .700l1.700 1.800M6 .200v6M4.300 4.500L6 6.300l1.700-1.800" fill="none" stroke="#1c2b33" stroke-width=".9"/></svg>
<svg class="abs" style="left:657.0px;top:226px" width="5" height="3" viewBox="0 0 5 3"><path d="M0 0h5L2.500 3z" fill="#1c2b33"/></svg>
<div class="t hd" id="th-cpr" style="left:673.500px;top:218px;transform-origin:0 0;transform:scaleX(0.935)">Cost per result</div>
<svg class="abs" style="left:676.5px;top:229px" width="8" height="7" viewBox="0 0 8 7"><path d="M2 6.800V.800M.3 2.500L2 .700l1.700 1.800M6 .200v6M4.300 4.500L6 6.300l1.700-1.800" fill="none" stroke="#1c2b33" stroke-width=".9"/></svg>
<svg class="abs" style="left:733.2px;top:226px" width="5" height="3" viewBox="0 0 5 3"><path d="M0 0h5L2.500 3z" fill="#1c2b33"/></svg>
<div class="t hd" id="th-bud" style="left:748.500px;top:222.500px;transform-origin:0 0;transform:scaleX(0.957)">Budget</div>
<svg class="abs" style="left:778px;top:223px" width="8" height="7" viewBox="0 0 8 7"><path d="M2 6.800V.800M.3 2.500L2 .700l1.700 1.800M6 .200v6M4.300 4.500L6 6.300l1.700-1.800" fill="none" stroke="#1c2b33" stroke-width=".9"/></svg>
<svg class="abs" style="left:808.2px;top:226px" width="5" height="3" viewBox="0 0 5 3"><path d="M0 0h5L2.500 3z" fill="#1c2b33"/></svg>
<div class="t hd" id="th-amt" style="left:824.200px;top:218px;transform-origin:0 0;transform:scaleX(0.941)">Amount spent</div>
<svg class="abs" style="left:827px;top:229px" width="8" height="7" viewBox="0 0 8 7"><path d="M2 6.800V.800M.3 2.500L2 .700l1.700 1.800M6 .200v6M4.300 4.500L6 6.300l1.700-1.800" fill="none" stroke="#1c2b33" stroke-width=".9"/></svg>
<svg class="abs" style="left:883.5px;top:226px" width="5" height="3" viewBox="0 0 5 3"><path d="M0 0h5L2.500 3z" fill="#1c2b33"/></svg>
<div class="t hd" id="th-ends" style="left:899.200px;top:222.500px;transform-origin:0 0;transform:scaleX(0.874)">Ends</div>
<svg class="abs" style="left:919px;top:223px" width="8" height="7" viewBox="0 0 8 7"><path d="M2 6.800V.800M.3 2.500L2 .700l1.700 1.800M6 .200v6M4.300 4.500L6 6.300l1.700-1.800" fill="none" stroke="#1c2b33" stroke-width=".9"/></svg>
<svg class="abs" style="left:940.1px;top:226px" width="5" height="3" viewBox="0 0 5 3"><path d="M0 0h5L2.500 3z" fill="#1c2b33"/></svg>
<div class="abs" style="left:949.500px;top:213px;width:46.500px;height:26px;overflow:hidden"><div class="t hd" style="left:6px;top:5px;transform-origin:0 0;transform:scaleX(.93)">Impressions</div></div>
<svg class="abs" style="left:958px;top:229px" width="8" height="7" viewBox="0 0 8 7"><path d="M2 6.800V.800M.3 2.500L2 .700l1.700 1.800M6 .200v6M4.300 4.500L6 6.300l1.700-1.800" fill="none" stroke="#1c2b33" stroke-width=".9"/></svg>
<div class="cb" style="left:43.500px;top:247.0px"></div>
<div class="tg on" style="top:247.8px"><i></i></div>
<div class="t nm" id="nm0" style="left:120.800px;top:243.8px;transform-origin:0 0;transform:scaleX(0.934)">Shri_ Dec 30 _Other Location_Sankranti Offer</div>
<div class="dot" style="top:245.5px"></div><div class="t v" style="left:311.700px;top:243.7px">Payment error</div>
<div class="dash" style="left:394px;top:247.8px"></div>
<div class="t v" style="left:424.500px;top:243.7px">7...</div>
<div class="t v" style="right:512.7px;top:243.7px">271</div>
<div class="t v" style="right:436.7px;top:243.7px">29,562</div>
<div class="t v" style="right:362.0px;top:243.7px">1.93</div>
<div class="t v" style="right:286.5px;top:243.7px">₹9.26</div>
<div class="t s" style="right:512.7px;top:256.9px">Leads (Form)</div>
<div class="t s" style="right:286.5px;top:256.9px">Per Lead (Form)</div>
<div class="t v" style="right:210.8px;top:243.7px">₹250.00</div>
<div class="t s" style="right:210.8px;top:256.9px">Daily average</div>
<div class="t v" style="right:135.8px;top:243.7px">₹2,508.95</div>
<div class="t v" style="right:79.3px;top:243.7px">Ongoing</div>
<div class="cb" style="left:43.500px;top:272.9px"></div>
<div class="tg on" style="top:273.7px"><i></i></div>
<div class="t nm" id="nm1" style="left:120.800px;top:269.7px;transform-origin:0 0;transform:scaleX(0.924)">Shri_ Dec 30_ B &amp; M_Sankranti</div>
<div class="dot" style="top:271.4px"></div><div class="t v" style="left:311.700px;top:269.6px">Payment error</div>
<div class="dash" style="left:394px;top:273.7px"></div>
<div class="t v" style="left:424.500px;top:269.6px">7...</div>
<div class="t v" style="right:512.7px;top:269.6px">305</div>
<div class="t v" style="right:436.7px;top:269.6px">34,934</div>
<div class="t v" style="right:362.0px;top:269.6px">2.16</div>
<div class="t v" style="right:286.5px;top:269.6px">₹8.17</div>
<div class="t s" style="right:512.7px;top:282.8px">Leads (Form)</div>
<div class="t s" style="right:286.5px;top:282.8px">Per Lead (Form)</div>
<div class="t v" style="right:210.8px;top:269.6px">₹250.00</div>
<div class="t s" style="right:210.8px;top:282.8px">Daily average</div>
<div class="t v" style="right:135.8px;top:269.6px">₹2,491.04</div>
<div class="t v" style="right:79.3px;top:269.6px">Ongoing</div>
<div class="cb" style="left:43.500px;top:298.8px"></div>
<div class="tg" style="top:299.6px"><i></i></div>
<div class="t nm" id="nm2" style="left:120.800px;top:295.6px;transform-origin:0 0;transform:scaleX(0.916)">Shri_ Dec 03_ B &amp; M_New year offer</div>
<div class="dot" style="top:297.3px"></div><div class="t v" style="left:311.700px;top:295.5px">Off</div>
<div class="dash" style="left:394px;top:299.6px"></div>
<div class="t v" style="left:424.500px;top:295.5px">7...</div>
<div class="t v" style="right:512.7px;top:295.5px">375</div>
<div class="t v" style="right:436.7px;top:295.5px">23,349</div>
<div class="t v" style="right:362.0px;top:295.5px">2.70</div>
<div class="t v" style="right:286.5px;top:295.5px">₹11.35</div>
<div class="t s" style="right:512.7px;top:308.7px">Leads (Form)</div>
<div class="t s" style="right:286.5px;top:308.7px">Per Lead (Form)</div>
<div class="t v" style="right:210.8px;top:295.5px">₹250.00</div>
<div class="t s" style="right:210.8px;top:308.7px">Daily average</div>
<div class="t v" style="right:135.8px;top:295.5px">₹4,257.59</div>
<div class="t v" style="right:79.3px;top:295.5px">Ongoing</div>
<div class="cb" style="left:43.500px;top:324.7px"></div>
<div class="tg" style="top:325.5px"><i></i></div>
<div class="t nm" id="nm3" style="left:120.800px;top:321.5px;transform-origin:0 0;transform:scaleX(0.911)">Shri_ Nov 20_ BLR &amp; mysore</div>
<div class="dot" style="top:323.2px"></div><div class="t v" style="left:311.700px;top:321.4px">Off</div>
<div class="dash" style="left:394px;top:325.5px"></div>
<div class="t v" style="left:424.500px;top:321.4px">7...</div>
<div class="t v" style="right:512.7px;top:321.4px">84</div>
<div class="t v" style="right:436.7px;top:321.4px">5,928</div>
<div class="t v" style="right:362.0px;top:321.4px">4.30</div>
<div class="t v" style="right:286.5px;top:321.4px">₹23.06</div>
<div class="t s" style="right:512.7px;top:334.6px">Leads (Form)</div>
<div class="t s" style="right:286.5px;top:334.6px">Per Lead (Form)</div>
<div class="t v" style="right:210.8px;top:321.4px">₹250.00</div>
<div class="t s" style="right:210.8px;top:334.6px">Daily average</div>
<div class="t v" style="right:135.8px;top:321.4px">₹1,936.78</div>
<div class="t v" style="right:79.3px;top:321.4px">Ongoing</div>
<div class="cb" style="left:43.500px;top:350.6px"></div>
<div class="tg" style="top:351.4px"><i></i></div>
<div class="t nm" id="nm4" style="left:120.800px;top:347.4px;transform-origin:0 0;transform:scaleX(0.929)">Shri_ Dec 03 _Other Location_New Year Offer</div>
<div class="dot" style="top:349.1px"></div><div class="t v" style="left:311.700px;top:347.3px">Off</div>
<div class="dash" style="left:394px;top:351.4px"></div>
<div class="t v" style="left:424.500px;top:347.3px">7...</div>
<div class="t v" style="right:512.7px;top:347.3px">460</div>
<div class="t v" style="right:436.7px;top:347.3px">32,830</div>
<div class="t v" style="right:362.0px;top:347.3px">3.03</div>
<div class="t v" style="right:286.5px;top:347.3px">₹14.41</div>
<div class="t s" style="right:512.7px;top:360.5px">Leads (Form)</div>
<div class="t s" style="right:286.5px;top:360.5px">Per Lead (Form)</div>
<div class="t v" style="right:210.8px;top:347.3px">₹250.00</div>
<div class="t s" style="right:210.8px;top:360.5px">Daily average</div>
<div class="t v" style="right:135.8px;top:347.3px">₹6,629.69</div>
<div class="t v" style="right:79.3px;top:347.3px">Ongoing</div>
<div class="cb" style="left:43.500px;top:376.5px"></div>
<div class="tg" style="top:377.3px"><i></i></div>
<div class="t nm" id="nm5" style="left:120.800px;top:373.3px;transform-origin:0 0;transform:scaleX(0.932)">Shri_ Nov 05_ Other Location</div>
<div class="dot" style="top:375.0px"></div><div class="t v" style="left:311.700px;top:373.2px">Off</div>
<div class="dash" style="left:394px;top:377.3px"></div>
<div class="t v" style="left:424.500px;top:373.2px">7...</div>
<div class="t v" style="right:512.7px;top:373.2px">253</div>
<div class="t v" style="right:436.7px;top:373.2px">21,701</div>
<div class="t v" style="right:362.0px;top:373.2px">2.64</div>
<div class="t v" style="right:286.5px;top:373.2px">₹14.32</div>
<div class="t s" style="right:512.7px;top:386.4px">Leads (Form)</div>
<div class="t s" style="right:286.5px;top:386.4px">Per Lead (Form)</div>
<div class="t v" style="right:210.8px;top:373.2px">₹250.00</div>
<div class="t s" style="right:210.8px;top:386.4px">Daily average</div>
<div class="t v" style="right:135.8px;top:373.2px">₹3,623.08</div>
<div class="t v" style="right:79.3px;top:373.2px">Ongoing</div>
<div class="cb" style="left:43.500px;top:402.4px"></div>
<div class="tg" style="top:403.2px"><i></i></div>
<div class="t nm" id="nm6" style="left:120.800px;top:399.2px;transform-origin:0 0;transform:scaleX(0.915)">Shri_ Nov 05_ BLR &amp; mysore</div>
<div class="dot" style="top:400.9px"></div><div class="t v" style="left:311.700px;top:399.1px">Off</div>
<div class="dash" style="left:394px;top:403.2px"></div>
<div class="t v" style="left:424.500px;top:399.1px">7...</div>
<div class="t v" style="right:512.7px;top:399.1px">210</div>
<div class="t v" style="right:436.7px;top:399.1px">20,856</div>
<div class="t v" style="right:362.0px;top:399.1px">2.52</div>
<div class="t v" style="right:286.5px;top:399.1px">₹17.32</div>
<div class="t s" style="right:512.7px;top:412.3px">Leads (Form)</div>
<div class="t s" style="right:286.5px;top:412.3px">Per Lead (Form)</div>
<div class="t v" style="right:210.8px;top:399.1px">₹250.00</div>
<div class="t s" style="right:210.8px;top:412.3px">Daily average</div>
<div class="t v" style="right:135.8px;top:399.1px">₹3,637.58</div>
<div class="t v" style="right:79.3px;top:399.1px">Ongoing</div>
<div class="cb" style="left:43.500px;top:428.3px"></div>
<div class="tg" style="top:429.1px"><i></i></div>
<div class="t nm" id="nm7" style="left:120.800px;top:425.1px;transform-origin:0 0;transform:scaleX(0.911)">Shri_ sept 4_ BLR &amp; mysore</div>
<div class="dot" style="top:426.8px"></div><div class="t v" style="left:311.700px;top:425.0px">Off</div>
<div class="dash" style="left:394px;top:429.1px"></div>
<div class="t v" style="left:424.500px;top:425.0px">7...</div>
<div class="dash" style="left:503.8px;top:429.1px"></div>
<div class="dash" style="left:579.8px;top:429.1px"></div>
<div class="dash" style="left:654.5px;top:429.1px"></div>
<div class="dash" style="left:730.0px;top:429.1px"></div>
<div class="t s" style="right:512.7px;top:438.2px">Lead (Form)</div>
<div class="t s" style="right:286.5px;top:438.2px">Per Lead (Form)</div>
<div class="t v" style="right:210.8px;top:425.0px">₹250.00</div>
<div class="t s" style="right:210.8px;top:438.2px">Daily average</div>
<div class="t v" style="right:135.8px;top:425.0px">₹0.00</div>
<div class="t v" style="right:79.3px;top:425.0px">Ongoing</div>
<div class="cb" style="left:43.500px;top:454.2px"></div>
<div class="tg" style="top:455.0px"><i></i></div>
<div class="t nm" id="nm8" style="left:120.800px;top:451.0px;transform-origin:0 0;transform:scaleX(0.930)">Shri_ Sept 4_ Other Location</div>
<div class="dot" style="top:452.7px"></div><div class="t v" style="left:311.700px;top:450.9px">Off</div>
<div class="dash" style="left:394px;top:455.0px"></div>
<div class="t v" style="left:424.500px;top:450.9px">7...</div>
<div class="dash" style="left:503.8px;top:455.0px"></div>
<div class="dash" style="left:579.8px;top:455.0px"></div>
<div class="dash" style="left:654.5px;top:455.0px"></div>
<div class="dash" style="left:730.0px;top:455.0px"></div>
<div class="t s" style="right:512.7px;top:464.1px">Lead (Form)</div>
<div class="t s" style="right:286.5px;top:464.1px">Per Lead (Form)</div>
<div class="t v" style="right:210.8px;top:450.9px">₹250.00</div>
<div class="t s" style="right:210.8px;top:464.1px">Daily average</div>
<div class="t v" style="right:135.8px;top:450.9px">₹0.00</div>
<div class="t v" style="right:79.3px;top:450.9px">Ongoing</div>
<div class="t v" id="ft-res" style="left:123.400px;top:478.5px;transform-origin:0 0;transform:scaleX(0.976)">Results from 30 campaigns</div>
<div class="abs" style="left:224.300px;top:478.7px;width:6px;height:6px;border-radius:3px;background:#1c2b33"></div><div class="t b" style="left:226.400px;top:479.5px;font-size:5px;color:#fff">i</div>
<div class="t v" style="left:425px;top:478.5px">7...</div>
<div class="t v" style="right:511.4px;top:478.5px">1,958</div><div class="t s" style="right:511.4px;top:491.2px">Leads (Form)</div>
<div class="t v" style="right:436.4px;top:478.5px;border-bottom:1px dotted #606a72;padding-bottom:0.5px">91,431</div><div class="t s" id="ft-acc" style="right:436.4px;top:491.2px;transform-origin:0 0;transform:scaleX(0.981)">Accounts Center ac...</div>
<div class="t v" style="right:362.0px;top:478.5px">4.71</div><div class="t s" id="ft-pac" style="right:362.0px;top:491.2px;transform-origin:0 0;transform:scaleX(1.019)">Per Accounts Cent...</div>
<div class="t v" style="right:285.5px;top:478.5px">₹12.81</div><div class="t s" style="right:285.5px;top:491.2px">Per Lead (Form)</div>
<div class="t v" style="right:134.7px;top:478.5px">₹25,084.71</div><div class="t s" style="right:134.7px;top:491.2px">Total spent</div>
<div class="abs" style="left:949.500px;top:474.9px;width:46.500px;height:20px;overflow:hidden"><div class="t v" style="left:42px;top:3.0px">4,852</div></div>
<div class="abs" style="left:38px;top:517px;width:954px;height:3.500px;border-radius:2px;background:#f6f7f8"></div>
<div class="abs" style="left:38px;top:517px;width:529px;height:3.500px;border-radius:2px;background:#c3c7cc"></div>
<!-- ================= LEFT NAV ICONS ================= -->
<svg class="abs" style="left:9px;top:114px" width="14" height="14" viewBox="0 0 14 14"><circle cx="7" cy="6.800" r="5.800" fill="none" stroke="#465a69" stroke-width=".9"/><path d="M2.200 9.800h9.600M2.800 11.300h8.400" stroke="#465a69" stroke-width=".8"/><path d="M7 7l2.300-2.800" stroke="#465a69" stroke-width="1"/><path d="M3.200 6.500h.9M4.300 3.800l.6.600M7 2.600v.9M10.800 6.500h-.9" stroke="#465a69" stroke-width=".6"/></svg>
<div class="abs" style="left:4px;top:133.500px;width:23.500px;height:21px;border-radius:4px;background:#e3eef9"></div>
<svg class="abs" style="left:9.500px;top:138px" width="13" height="12" viewBox="0 0 13 12"><path d="M0 0h13v2.800H0z" fill="#0a78be"/><g fill="#0a78be"><rect x="0" y="4" width="3.500" height="2"/><rect x="4.700" y="4" width="3.500" height="2"/><rect x="9.500" y="4" width="3.500" height="2"/><rect x="0" y="7" width="3.500" height="2"/><rect x="4.700" y="7" width="3.500" height="2"/><rect x="9.500" y="7" width="3.500" height="2"/><rect x="0" y="10" width="3.500" height="2"/><rect x="4.700" y="10" width="3.500" height="2"/><rect x="9.500" y="10" width="3.500" height="2"/></g></svg>
<svg class="abs" style="left:9px;top:160px" width="14" height="13" viewBox="0 0 14 13"><path d="M4 2.200l8.500 1-1 8.800-5-.6" fill="none" stroke="#465a69" stroke-width=".9"/><rect x="1.800" y=".8" width="7.500" height="10" rx=".8" fill="#fff" stroke="#465a69" stroke-width=".9"/><path d="M.7 1.800v8" stroke="#465a69" stroke-width=".8"/><path d="M3.500 3.800h4M3.500 5.800h4" stroke="#465a69" stroke-width=".7"/></svg>
<svg class="abs" style="left:8.500px;top:183.500px" width="15" height="10" viewBox="0 0 15 10"><g fill="none" stroke="#465a69" stroke-width=".8"><circle cx="7.500" cy="2" r="1.500"/><circle cx="3" cy="2.800" r="1.300"/><circle cx="12" cy="2.800" r="1.300"/><path d="M4.500 9.300V7.200c0-1.400 1.200-2.300 3-2.300s3 .9 3 2.300v2.100zM.6 9.300V7.500c0-1.100.9-1.800 2.300-1.800.5 0 1 .1 1.300.3M14.400 9.300V7.500c0-1.100-.9-1.800-2.300-1.800-.5 0-1 .1-1.300.3M.6 9.300h13.800"/></g></svg>
<svg class="abs" style="left:9px;top:205px" width="14" height="13" viewBox="0 0 14 13"><path d="M1 4.200l9.500-3.200v8.500L1 6.800z" fill="none" stroke="#465a69" stroke-width=".9" stroke-linejoin="round"/><path d="M3.500 7.500l1 3.500h2l-.9-3M10.500 3.800c1.500 0 1.500 3 0 3" fill="none" stroke="#465a69" stroke-width=".9"/><circle cx="9.800" cy="9.800" r="1.500" fill="#465a69"/></svg>
<svg class="abs" style="left:9px;top:228.500px" width="14" height="11" viewBox="0 0 14 11"><rect x=".5" y=".5" width="13" height="10" rx="1.500" fill="none" stroke="#1c2b33" stroke-width="1"/><path d="M.5 3.200h13" stroke="#1c2b33" stroke-width="2"/><path d="M2.500 7.800h2M6 7.800h3.500" stroke="#1c2b33" stroke-width=".9"/></svg>
<svg class="abs" style="left:9px;top:249px" width="14" height="15" viewBox="0 0 14 15"><g fill="none" stroke="#465a69" stroke-width=".9"><circle cx="7" cy="4" r="3.300"/><path d="M7 7.300v3.500M4.800 6.500L2.600 10M9.200 6.500l2.200 3.500"/><circle cx="2" cy="11.500" r="1.400"/><circle cx="7" cy="12.500" r="1.400"/><circle cx="12" cy="11.500" r="1.400"/></g></svg>
<svg class="abs" style="left:10.500px;top:275.500px" width="11" height="9" viewBox="0 0 11 9"><path d="M0 .7h11M0 4.500h11M0 8.300h11" stroke="#8d979f" stroke-width=".8"/></svg>

<div class="abs" style="left:8px;top:394px;width:15px;height:1px;background:#d9dde1"></div>
<div class="abs" style="left:6.500px;top:399px;width:18.500px;height:18.500px;border-radius:10px;background:#e2f1ec"></div>
<div class="t" style="left:12.800px;top:403px;font-size:11px;color:#4d7a70">?</div>
<svg class="abs" style="left:9.500px;top:425px" width="13" height="11" viewBox="0 0 13 11"><path d="M2.500 2.500v7.500" stroke="#465a69" stroke-width=".8"/><path d="M.6 3.200v6c0 .7.400 1.200 1 1.200h10c.6 0 1-.5 1-1.200V.700H2.600v9" fill="none" stroke="#465a69" stroke-width=".9"/><rect x="4.300" y="2.300" width="3.500" height="3" fill="#465a69"/><path d="M4.300 7h6.800M4.300 8.700h6.800M9 3h2M9 4.600h2" stroke="#465a69" stroke-width=".7"/></svg>
<svg class="abs" style="left:9.500px;top:445.500px" width="13" height="13" viewBox="0 0 13 13"><circle cx="6.500" cy="6.500" r="2.100" fill="none" stroke="#465a69" stroke-width=".9"/><path d="M5.500.7h2l.4 1.600 1.300.7 1.500-.6 1.100 1.700-1.100 1.200v1.400l1.100 1.200-1.100 1.700-1.500-.6-1.300.7-.4 1.600h-2l-.4-1.600-1.300-.7-1.500.6-1.100-1.700 1.100-1.200V5.300L1.200 4.100l1.100-1.700 1.500.6 1.300-.7z" fill="none" stroke="#465a69" stroke-width=".9" stroke-linejoin="round"/></svg>
<svg class="abs" style="left:9.500px;top:466px" width="12" height="13" viewBox="0 0 12 13"><path d="M6 1.200c-2.300 0-3.700 1.700-3.700 3.800v2.800L.9 9.800h10.200L9.700 7.800V5c0-2.100-1.400-3.800-3.700-3.800zM4.500 10.500c0 2 3 2 3 0" fill="none" stroke="#465a69" stroke-width=".9"/></svg>
<div class="abs" style="left:14px;top:461.500px;width:14px;height:11px;border-radius:5.500px;background:#c41230;border:.5px solid #fff"></div>
<div class="t b" style="left:17.300px;top:463.800px;font-size:6.800px;color:#fff;letter-spacing:-.3px">13</div>
<svg class="abs" style="left:10px;top:486px" width="12" height="12" viewBox="0 0 12 12"><circle cx="4.800" cy="4.800" r="3.900" fill="none" stroke="#465a69" stroke-width=".9"/><path d="M7.700 7.700l3.800 3.800" stroke="#465a69" stroke-width="1.100"/></svg>
<svg class="abs" style="left:10px;top:506px" width="12" height="13" viewBox="0 0 12 13"><g fill="none" stroke="#465a69" stroke-width=".9"><ellipse cx="6" cy="7.800" rx="3.300" ry="4.200"/><path d="M3.800 4.500C3.800 1.500 8.200 1.500 8.200 4.500M2.700 6.500L.7 5.300M9.300 6.500l2-1.200M2.700 8.500H.5M9.300 8.500h2.200M3 10.500l-1.800 1.300M9 10.500l1.800 1.300M6 5.500v6.500M3 5.800h6"/></g></svg>
<div class="abs" style="left:0;top:527px;width:31px;height:1px;background:#e4e7ea"></div>

<!-- ================= RIGHT NAV ICONS ================= -->
<svg class="abs" style="left:1008px;top:73.700px" width="9" height="8.500" viewBox="0 0 10 10"><path d="M1 10V6.500M3.700 10V3.500M6.300 10V5M9 10V.5" stroke="#dfe4e8" stroke-width="1.400"/></svg>
<svg class="abs" style="left:1008px;top:98px" width="9" height="9" viewBox="0 0 10 10"><path d="M1.200 8.800l.5-2.200L7 1.300c.5-.5 1.200-.5 1.700 0s.5 1.200 0 1.700L3.400 8.300z" fill="none" stroke="#7f8a93" stroke-width=".9"/></svg>
<svg class="abs" style="left:1007px;top:122.400px" width="10" height="10" viewBox="0 0 10 10"><circle cx="5" cy="5" r="4.200" fill="none" stroke="#7f8a93" stroke-width=".9"/><path d="M5 2.500V5l1.700 1" fill="none" stroke="#7f8a93" stroke-width=".9"/></svg>
<!-- translate bubble -->
<div class="abs" style="left:1002px;top:248.800px;width:30px;height:20.200px;border-radius:10px;background:#f6f8fc"></div>
<div class="abs" style="left:1005.400px;top:250.800px;width:15.600px;height:15.800px;border-radius:8px 0 0 8px;background:#8d9eea"></div>
<svg class="abs" style="left:1008.500px;top:253.500px" width="10" height="10" viewBox="0 0 10 10"><path d="M.8 1.800h4.400M3 .8v1M1.500 1.800c.3 1.500 1.500 2.700 3.200 3.300M4.500 1.800C4.200 3.300 3 4.500 1 5.100" fill="none" stroke="#e9edfb" stroke-width=".8"/><path d="M4.800 9.400l2-5 2 5M5.500 7.800h2.600" fill="none" stroke="#e9edfb" stroke-width=".9"/></svg>
<!-- ================= TASKBAR ================= -->
<div id="taskbar" class="abs"></div>
<!-- start -->
<svg class="abs" style="left:11.500px;top:555.500px" width="12" height="12" viewBox="0 0 12 12"><path d="M0 1.700L5 1v4.700H0zM5.800.9L12 0v5.700H5.800zM0 6.400h5V11l-5-.7zM5.800 6.400H12V12l-6.200-.9z" fill="#fff"/></svg>
<!-- search -->
<div class="abs" style="left:36px;top:546.500px;width:216px;height:29.500px;background:#f2f2f1;border-top:1px solid #dcdcdc"></div>
<svg class="abs" style="left:45px;top:554.500px" width="13" height="13" viewBox="0 0 13 13"><circle cx="7.800" cy="5.200" r="3.900" fill="none" stroke="#2b2b2b" stroke-width="1.100"/><path d="M5 8L.8 12.200" stroke="#2b2b2b" stroke-width="1.300"/></svg>
<div class="t" id="tb-search" style="left:66.400px;top:555.500px;font-size:11.200px;color:#3b3b3b;transform-origin:0 0;transform:scaleX(0.965)">Type here to search</div>
<svg class="abs" style="left:196px;top:548px" width="50" height="26" viewBox="0 0 50 26"><path d="M20.600 4.500c.8 4.200 2.300 6 6.500 7.200-4.200 1.200-5.700 3-6.500 7.200-.8-4.200-2.300-6-6.500-7.200 4.200-1.200 5.700-3 6.500-7.200z" fill="#f9c22d"/><path d="M37.600 11c.4 2 1.100 2.800 3 3.400-1.900.6-2.600 1.400-3 3.400-.4-2-1.100-2.800-3-3.400 1.900-.6 2.600-1.400 3-3.400z" fill="#f7c738"/><path d="M5 16.200c.3 1.600.9 2.300 2.500 2.800-1.600.5-2.200 1.200-2.500 2.800-.3-1.600-.9-2.300-2.500-2.800 1.600-.5 2.200-1.200 2.500-2.800z" fill="#3aa0e8"/><circle cx="32.600" cy="4.800" r="1.100" fill="#e2694a"/><circle cx="45.800" cy="19.800" r=".9" fill="#c9b44a"/></svg>
<!-- task view -->
<svg class="abs" style="left:263px;top:554.500px" width="14" height="13" viewBox="0 0 14 13"><path d="M1.500.5v12M9.500.5v12M1.500 3.300h8M1.500 9.700h8" fill="none" stroke="#fff" stroke-width="1.100"/><path d="M12.300 1v2M12.300 5v7" stroke="#fff" stroke-width="1.300"/></svg>
<!-- copilot -->
<svg class="abs" style="left:299px;top:552px" width="19" height="19" viewBox="0 0 19 19"><defs><linearGradient id="cpA" x1="0" y1="0" x2="1" y2="1"><stop offset="0" stop-color="#2a7fe0"/><stop offset=".5" stop-color="#38c6c0"/><stop offset="1" stop-color="#f7c948"/></linearGradient><linearGradient id="cpB" x1="0" y1="0" x2="1" y2="1"><stop offset="0" stop-color="#b85af0"/><stop offset=".6" stop-color="#f0629a"/><stop offset="1" stop-color="#f59a4a"/></linearGradient></defs><path d="M6.500 1.500h4.800c1.200 0 2 .7 2.300 1.800l1.200 4.500H9.200L7.800 3.500C7.500 2.300 6 2.700 5.700 3.800L3.500 12c-.5 1.800-2.800 1.500-2.600-.5L2.800 4.300C3.200 2.600 4.700 1.500 6.500 1.500z" fill="url(#cpA)"/><path d="M12.500 17.500H7.700c-1.200 0-2-.7-2.300-1.800L4.200 11.200h5.600l1.400 4.300c.3 1.200 1.800.8 2.100-.3L15.500 7c.5-1.800 2.800-1.500 2.600.5l-1.900 7.200c-.4 1.700-1.900 2.800-3.700 2.800z" fill="url(#cpB)"/></svg>
<!-- edge -->
<svg class="abs" style="left:335.500px;top:551.500px" width="19" height="19" viewBox="0 0 19 19"><defs><linearGradient id="edA" x1="0" y1="0" x2="1" y2="0"><stop offset="0" stop-color="#2fc2df"/><stop offset="1" stop-color="#6fd94c"/></linearGradient></defs><circle cx="9.500" cy="9.500" r="9" fill="#1577d3"/><path d="M.6 9C1 4 5 .5 9.800.5c4.800 0 8.700 3.300 8.700 7.300 0 2.500-2 4.200-4.400 4.200-1.600 0-2.600-.6-2.600-1.400 0-.7.800-1 .8-2.300 0-1.700-1.600-3-3.800-3C5 5.300 1.500 6.500.6 9z" fill="url(#edA)"/><path d="M7 8.300c-1.300 1-2 2.500-2 4.200 0 3 2.400 5.500 5.500 5.900-5 .8-9.600-2.800-9.900-8 .8-2.800 3.300-4.600 6.400-4.600 1.200 0 2.200.4 2.900 1-1.100.1-2.100.7-2.900 1.500z" fill="#0c59a4"/></svg>
<!-- explorer -->
<svg class="abs" style="left:372.500px;top:553px" width="18" height="16" viewBox="0 0 18 16"><path d="M.5 2.300C.5 1.600 1 1 1.700 1h4.500l1.500 1.500h8.600c.7 0 1.200.6 1.200 1.300V5H.5z" fill="#e8a41e"/><path d="M.5 4h17v10.500c0 .6-.5 1-1 1H1.500c-.6 0-1-.4-1-1z" fill="#fbd25a"/><path d="M4.500 10h9v5.500h-9z" fill="#4a8ad8"/><path d="M7 12.500h4v3H7z" fill="#fbd25a"/></svg>
<div class="abs" style="left:367px;top:574.500px;width:29.500px;height:1.500px;background:#8ab6e6"></div>
<!-- outlook -->
<svg class="abs" style="left:409px;top:552px" width="19" height="18" viewBox="0 0 19 18"><path d="M6 3.500L12.500.5 19 3.500v10c0 .8-.6 1.500-1.500 1.500H6z" fill="#1e6fc8"/><path d="M8 4h9v6l-4.500 3L8 10z" fill="#49b0f2"/><path d="M6 8l6.500 4.500L19 8v6.500c0 .8-.6 1.500-1.500 1.500H7.500C6.600 16 6 15.300 6 14.500z" fill="#1a5fb4"/><rect x="0" y="5" width="10" height="10" rx="1.300" fill="#0f62c0"/></svg>
<div class="t b" style="left:411.200px;top:556.300px;font-size:8.500px;color:#fff">O</div>
<!-- store -->
<svg class="abs" style="left:445.500px;top:552px" width="18" height="19" viewBox="0 0 18 19"><path d="M5.500 5V3.300C5.500 2 6.500 1 7.800 1h2.400c1.300 0 2.300 1 2.300 2.300V5" fill="none" stroke="#3d8fd6" stroke-width="1.300"/><path d="M.8 5h16.400v11c0 1.200-.9 2.200-2.200 2.200H3c-1.300 0-2.200-1-2.200-2.200z" fill="#f4f4f2"/><rect x="5.600" y="8" width="3" height="3" fill="#f25022"/><rect x="9.400" y="8" width="3" height="3" fill="#7fba00"/><rect x="5.600" y="11.800" width="3" height="3" fill="#00a4ef"/><rect x="9.400" y="11.800" width="3" height="3" fill="#ffb900"/></svg>
<!-- chrome active -->
<div class="abs" style="left:474px;top:546px;width:36px;height:30px;background:#4b565b"></div>
<div class="abs" style="left:474px;top:574.500px;width:36px;height:1.500px;background:#9cc3ea"></div>
<svg class="abs" style="left:483px;top:551.500px" width="22" height="22" viewBox="0 0 22 22"><circle cx="9" cy="9" r="8.500" fill="#fff"/><path d="M9 .5A8.500 8.500 0 0 1 16.400 4.800H9A4.200 4.200 0 0 0 5.300 7L1.700 4.700A8.500 8.500 0 0 1 9 .5z" fill="#e33b2e"/><path d="M16.400 4.800A8.500 8.500 0 0 1 8.300 17.500l3.900-6.400A4.200 4.200 0 0 0 12.600 6.800V4.800z" fill="#fbc116"/><path d="M1.700 4.700l3.700 6.400A4.200 4.200 0 0 0 10 13.100l-1.700 4.400A8.500 8.500 0 0 1 1.700 4.700z" fill="#2ca14c"/><circle cx="9" cy="9" r="3.300" fill="#3f86ee" stroke="#fff" stroke-width=".9"/><circle cx="15.500" cy="15.500" r="5" fill="#8e24aa"/></svg>
<div class="t b" style="left:496.700px;top:564.500px;font-size:5.500px;color:#fff">C</div>
<!-- WPS -->
<div class="abs" style="left:519.300px;top:552px;width:18.500px;height:18.500px;border-radius:2.500px;background:#ee2230"></div>
<svg class="abs" style="left:522px;top:556.500px" width="13" height="10" viewBox="0 0 13 10"><path d="M.5.800h3L5 6 6.500 2.500 8 6 9.500.8h3L9.500 9.200H7.200L6.500 7.200 5.800 9.200H3.500z" fill="#fff"/></svg>
<!-- notepad-like -->
<svg class="abs" style="left:555px;top:551.500px" width="20" height="19" viewBox="0 0 20 19"><path d="M7 1.500l9.500 1L19 16l-12.500 1.500z" fill="#dfe8ec"/><path d="M6.800 2.500l8.500.8-2 11.500L1.200 13.500z" fill="#8fb6bf"/><path d="M7.800 3.500l6.500.6-1.600 9.200-9.200-1z" fill="#b9d6dc"/><path d="M1.200 13.500l12.100 1.300 5.700 1.200-12.500 1.500z" fill="#f4f7f8"/></svg>
<div class="abs" style="left:550px;top:574.500px;width:30.500px;height:1.500px;background:#8ab6e6"></div>
<!-- chrome 2 -->
<svg class="abs" style="left:592.500px;top:551.500px" width="22" height="22" viewBox="0 0 22 22"><circle cx="9" cy="9" r="8.500" fill="#fff"/><path d="M9 .5A8.500 8.500 0 0 1 16.400 4.800H9A4.200 4.200 0 0 0 5.300 7L1.700 4.700A8.500 8.500 0 0 1 9 .5z" fill="#e33b2e"/><path d="M16.400 4.800A8.500 8.500 0 0 1 8.300 17.500l3.900-6.400A4.200 4.200 0 0 0 12.600 6.800V4.800z" fill="#fbc116"/><path d="M1.700 4.700l3.700 6.400A4.200 4.200 0 0 0 10 13.100l-1.700 4.400A8.500 8.500 0 0 1 1.700 4.700z" fill="#2ca14c"/><circle cx="9" cy="9" r="3.300" fill="#3f86ee" stroke="#fff" stroke-width=".9"/><circle cx="15.500" cy="15.500" r="5" fill="#5a2fb8"/></svg>
<div class="t b" style="left:606.200px;top:564.500px;font-size:5.500px;color:#fff">B</div>
<div class="abs" style="left:587px;top:574.500px;width:29.500px;height:1.500px;background:#8ab6e6"></div>
<!-- top stories -->
<svg class="abs" style="left:711.500px;top:551.500px" width="20" height="20" viewBox="0 0 20 20"><path d="M6 1.500l12.500 1.800-1.800 12L4.200 13.500z" fill="#5b6ff0"/><path d="M2.500 4.500l13-1.200 1.200 12.500-13 1.200z" fill="#a45ee8"/><path d="M9 7.500h5.500M9 10h5.500M9 12.500h4" stroke="#fff" stroke-width="1.200"/><path d="M5.800 6.500c1.500 1.300 2.200 2.600 2.200 4 0 1.400-1 2.500-2.300 2.500S3.500 12 3.500 10.700c0-.9.500-1.500 1-2 .1.500.4.900.8 1 .3-1 .5-2 .5-3.200z" fill="#ffd9f2"/></svg>
<div class="t" id="tb-top" style="left:736.500px;top:555.500px;font-size:11.200px;color:#fff;transform-origin:0 0;transform:scaleX(0.893)">Top Stories</div>
<svg class="abs" style="left:805.500px;top:557.500px" width="10" height="7" viewBox="0 0 10 7"><path d="M.8 6L5 1.500 9.200 6" fill="none" stroke="#fff" stroke-width="1.100"/></svg>
<svg class="abs" style="left:821.500px;top:554.500px" width="14" height="14" viewBox="0 0 14 14"><circle cx="7" cy="7" r="6.200" fill="#e6d52a"/><circle cx="7" cy="7" r="4" fill="#c9c51e"/><path d="M7 4.300v5.400M4.300 7h5.400" stroke="#2d8a1f" stroke-width="1.600"/></svg>
<svg class="abs" style="left:841px;top:555.500px" width="10" height="12" viewBox="0 0 12 14"><rect x="1.500" y="3" width="6.500" height="8" rx="1.500" fill="none" stroke="#fff" stroke-width="1"/><path d="M8 6l2.800-1.200v4.400L8 8M2.500 1.200h4.500M2.500 12.800h4.500" fill="none" stroke="#fff" stroke-width=".9"/></svg>
<svg class="abs" style="left:858px;top:556.500px" width="12" height="9.500" viewBox="0 0 14 11"><rect x="3.500" y="3.500" width="9.500" height="5.500" rx=".8" fill="#fff" fill-opacity=".9" stroke="#fff" stroke-width=".9"/><path d="M13.500 5v2.500" stroke="#fff" stroke-width="1"/><path d="M2 1v5.500M.5 1.500h3v2h-3z" fill="none" stroke="#fff" stroke-width=".9"/></svg>
<svg class="abs" style="left:875.500px;top:554.500px" width="14" height="13" viewBox="0 0 14 13"><rect x=".8" y="2" width="10.500" height="8" rx=".8" fill="none" stroke="#fff" stroke-width="1"/><path d="M12.500 1v9.500h-9" fill="none" stroke="#fff" stroke-width=".8"/><path d="M3 8c0-1.700 1.300-3 3-3M6 3.500h2v2" fill="none" stroke="#fff" stroke-width=".9"/><circle cx="10.300" cy="10.300" r="2" fill="#3f7fe0"/></svg>
<svg class="abs" style="left:893px;top:555px" width="13" height="12" viewBox="0 0 13 12"><path d="M.8 4.200h2.200l3-2.800v9.200l-3-2.800H.8z" fill="none" stroke="#fff" stroke-width=".9" stroke-linejoin="round"/><path d="M7.800 4c.9.900.9 3.100 0 4M9.500 2.500c1.800 1.800 1.800 5.200 0 7" fill="none" stroke="#fff" stroke-width=".9"/><path d="M11.300 1.300c2.300 2.500 2.300 6.900 0 9.400" fill="none" stroke="#8a8f92" stroke-width=".8"/></svg>
<div class="t" id="tb-eng" style="left:913.800px;top:550px;font-size:9.400px;color:#fff;transform-origin:0 0;transform:scaleX(0.836)">ENG</div>
<div class="t" id="tb-in" style="left:918.700px;top:562.500px;font-size:9.400px;color:#fff;transform-origin:0 0;transform:scaleX(0.885)">IN</div>
<div class="t" id="tb-time" style="left:944.300px;top:550px;font-size:9.400px;color:#fff;transform-origin:0 0;transform:scaleX(0.902)">4:47 PM</div>
<div class="t" id="tb-date" style="left:941.400px;top:562.500px;font-size:9.400px;color:#fff;transform-origin:0 0;transform:scaleX(0.920)">1/16/2026</div>
<svg class="abs" style="left:992.500px;top:554px" width="18" height="17" viewBox="0 0 18 17"><path d="M.8.800h11.400v8.400H4.500L2.800 11.500V9.200H.8z" fill="#fff"/><path d="M2.800 3h7.400M2.800 5h7.400M2.800 7h5" stroke="#3a3d3c" stroke-width=".8"/><circle cx="12.200" cy="12" r="4.200" fill="#2e3332" stroke="#d8dada" stroke-width=".9"/></svg>
<div class="t b" style="left:1002.600px;top:562.500px;font-size:7.500px;color:#fff">2</div>
<div class="abs" style="left:1020px;top:546px;width:1px;height:30px;background:#6a6f72"></div>
</div>
</body>
</html>
